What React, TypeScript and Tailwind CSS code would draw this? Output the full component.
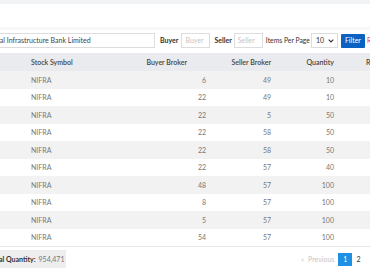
const rows = [
  { sn: 1, symbol: "NIFRA", buyer: 6, seller: 49, qty: 10 },
  { sn: 2, symbol: "NIFRA", buyer: 22, seller: 49, qty: 10 },
  { sn: 3, symbol: "NIFRA", buyer: 22, seller: 5, qty: 50 },
  { sn: 4, symbol: "NIFRA", buyer: 22, seller: 58, qty: 50 },
  { sn: 5, symbol: "NIFRA", buyer: 22, seller: 58, qty: 50 },
  { sn: 6, symbol: "NIFRA", buyer: 22, seller: 57, qty: 40 },
  { sn: 7, symbol: "NIFRA", buyer: 48, seller: 57, qty: 100 },
  { sn: 8, symbol: "NIFRA", buyer: 8, seller: 57, qty: 100 },
  { sn: 9, symbol: "NIFRA", buyer: 5, seller: 57, qty: 100 },
  { sn: 10, symbol: "NIFRA", buyer: 54, seller: 57, qty: 100 },
]

const cols = "grid grid-cols-[55px_95px_92px_65px_63px_60px_80px]"

export default function App() {
  return (
    <div className="w-[370px] h-[270px] overflow-hidden bg-white font-['Lato',sans-serif] text-[7px]">
      <div className="-ml-[30px] w-[520px]">
        <div className="h-[4px] bg-[#f2f3f4]" />
        <div className="h-[23px]" />
        <div className="h-[3px] bg-[#f7f7f8]" />

        {/* filters */}
        <div className="mt-[3px] h-[15px] flex items-center text-[#333] whitespace-nowrap">
          <div className="ml-[4px] w-[181px] h-full border border-[#ddd] flex items-center pl-[4px] text-[#444]">
            National Infrastructure Bank Limited
          </div>
          <span className="ml-[5px] font-bold">Buyer</span>
          <div className="ml-[3px] w-[29px] h-full border border-[#ddd] flex items-center pl-[3px] text-[#c4c4c4]">Buyer</div>
          <span className="ml-[4px] font-bold">Seller</span>
          <div className="ml-[2px] w-[29px] h-full border border-[#ddd] flex items-center pl-[3px] text-[#c4c4c4]">Seller</div>
          <span className="ml-[3px] text-[6.8px]">Items Per Page</span>
          <div className="ml-[1px] w-[27px] h-full border border-[#ddd] flex items-center pl-[4px] pr-[3px] justify-between">
            <span>10</span>
            <svg width="6" height="4" viewBox="0 0 6 4" fill="none">
              <path d="M0.7 0.7 L3 3 L5.3 0.7" stroke="#333" strokeWidth="1.1" />
            </svg>
          </div>
          <div className="ml-[3px] w-[24px] h-[14px] bg-[#0b62c0] text-white flex items-center justify-center rounded-[1px]">Filter</div>
          <span className="ml-[2px] text-[#e53935]">Reset</span>
        </div>

        {/* table */}
        <div className="mt-[5px]">
          <div className={`${cols} h-[18px] items-center bg-[#e9ebee] text-[#444] font-semibold whitespace-nowrap`}>
            <div className="pl-[6px]">S.N.</div>
            <div className="pl-[6px]">Stock Symbol</div>
            <div className="text-right pr-[25px]">Buyer Broker</div>
            <div className="text-right pr-[6px]">Seller Broker</div>
            <div className="text-right pr-[6px]">Quantity</div>
            <div className="pl-[26px]">Rate</div>
            <div className="text-right pr-[6px]">Amount</div>
          </div>
          {rows.map((r, i) => (
            <div
              key={r.sn}
              className={`${cols} h-[17.5px] items-center text-[#777] ${i % 2 === 0 ? "bg-[#f2f2f2]" : "bg-white"}`}
            >
              <div className="pl-[6px]">{r.sn}</div>
              <div className="pl-[6px]">{r.symbol}</div>
              <div className="text-right pr-[6px]">{r.buyer}</div>
              <div className="text-right pr-[6px]">{r.seller}</div>
              <div className="text-right pr-[6px]">{r.qty}</div>
              <div className="text-right pr-[6px]">380</div>
              <div className="text-right pr-[6px]">3,800</div>
            </div>
          ))}
          <div className="h-px bg-[#e6e6e6]" />
        </div>

        {/* footer */}
        <div className="mt-[3px] h-[18px] flex items-center whitespace-nowrap">
          <div className="ml-[13px] w-[83px] h-full bg-[#eeeeee] flex items-center pl-[6px]">
            <span className="font-bold text-[#333]">Total Quantity:</span>
            <span className="ml-[3px] text-[#777]">954,471</span>
          </div>
          <div className="ml-[235px] flex items-center">
            <span className="text-[#ccc]">«</span>
            <span className="ml-[4px] text-[#c4c4c4]">Previous</span>
            <div className="ml-[4px] w-[14px] h-[13px] bg-[#1e90e6] text-white flex items-center justify-center">1</div>
            <span className="ml-[4px] text-[#333]">2</span>
            <span className="ml-[12px] text-[#333]">Next »</span>
          </div>
        </div>
      </div>
    </div>
  )
}
